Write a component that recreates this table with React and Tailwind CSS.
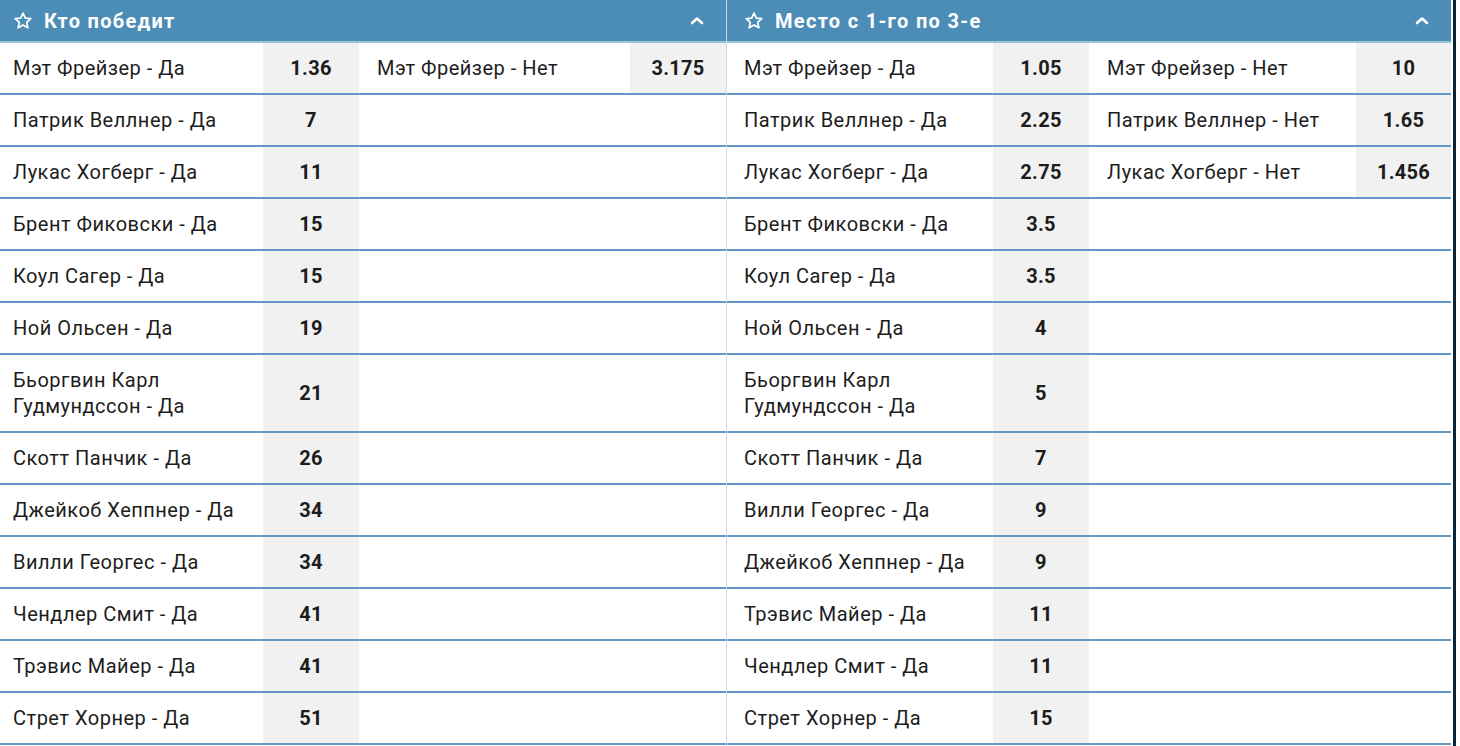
import React from "react";

const leftRows = [
  ["Мэт Фрейзер - Да", "1.36", "Мэт Фрейзер - Нет", "3.175"],
  ["Патрик Веллнер - Да", "7"],
  ["Лукас Хогберг - Да", "11"],
  ["Брент Фиковски - Да", "15"],
  ["Коул Сагер - Да", "15"],
  ["Ной Ольсен - Да", "19"],
  ["Бьоргвин Карл\nГудмундссон - Да", "21"],
  ["Скотт Панчик - Да", "26"],
  ["Джейкоб Хеппнер - Да", "34"],
  ["Вилли Георгес - Да", "34"],
  ["Чендлер Смит - Да", "41"],
  ["Трэвис Майер - Да", "41"],
  ["Стрет Хорнер - Да", "51"],
];

const rightRows = [
  ["Мэт Фрейзер - Да", "1.05", "Мэт Фрейзер - Нет", "10"],
  ["Патрик Веллнер - Да", "2.25", "Патрик Веллнер - Нет", "1.65"],
  ["Лукас Хогберг - Да", "2.75", "Лукас Хогберг - Нет", "1.456"],
  ["Брент Фиковски - Да", "3.5"],
  ["Коул Сагер - Да", "3.5"],
  ["Ной Ольсен - Да", "4"],
  ["Бьоргвин Карл\nГудмундссон - Да", "5"],
  ["Скотт Панчик - Да", "7"],
  ["Вилли Георгес - Да", "9"],
  ["Джейкоб Хеппнер - Да", "9"],
  ["Трэвис Майер - Да", "11"],
  ["Чендлер Смит - Да", "11"],
  ["Стрет Хорнер - Да", "15"],
];

function Star() {
  return (
    <svg width="20" height="20" viewBox="0 0 24 24" fill="none" stroke="white" strokeWidth="2.1" strokeLinejoin="round">
      <path d="M12 2.5l2.8 6 6.5.75-4.85 4.45 1.35 6.4L12 16.9l-5.8 3.2 1.35-6.4L2.7 9.25l6.5-.75z" />
    </svg>
  );
}

function Chevron() {
  return (
    <svg width="14" height="9" viewBox="0 0 14 9" fill="none" stroke="white" strokeWidth="2.6" strokeLinecap="round" strokeLinejoin="round">
      <path d="M2 7l5-4.5 5 4.5" />
    </svg>
  );
}

function Panel({ title, rows, cols, pad }) {
  return (
    <div className="flex flex-col">
      <div className={`flex h-[43px] items-center justify-between bg-[#4b8db6] ${pad} pr-[22px] border-b-2 border-[#9cc2da]`}>
        <div className="flex items-center gap-[11px]">
          <Star />
          <span className="text-[20px] font-bold tracking-[1.3px] text-white leading-none">{title}</span>
        </div>
        <Chevron />
      </div>
      {rows.map((r, i) => (
        <div key={i} className={`grid ${cols} border-b-2 border-[#6696c4]`}>
          <div className={`py-3 ${pad} pr-2 text-[20px] tracking-[0.5px] leading-[26px] text-[#1d1d1d] whitespace-pre-line`}>{r[0]}</div>
          <div className="flex items-center justify-center bg-[#f1f1f1] text-[20px] font-bold tracking-[0.3px] text-[#1c1c1c]">{r[1]}</div>
          <div className="py-3 pl-[18px] pr-2 text-[20px] tracking-[0.5px] leading-[26px] text-[#1d1d1d]">{r[2]}</div>
          <div className={`flex items-center justify-center text-[20px] font-bold tracking-[0.3px] text-[#1c1c1c] ${r[3] ? "bg-[#f1f1f1]" : ""}`}>{r[3]}</div>
        </div>
      ))}
    </div>
  );
}

export default function App() {
  return (
    <div className="flex h-[746px] w-[1460px] overflow-hidden bg-white font-['Roboto',sans-serif]">
      <div className="w-[726px]">
        <Panel title="Кто победит" rows={leftRows} cols="grid-cols-[263px_96px_1fr_96px]" pad="pl-[13px]" />
      </div>
      <div className="w-px bg-[#cfd8df]" />
      <div className="w-[724px]">
        <Panel title="Место с 1-го по 3-е" rows={rightRows} cols="grid-cols-[266px_96px_1fr_95px]" pad="pl-[17px]" />
      </div>
      <div className="w-[2px]" />
      <div className="w-[3px] bg-[#0d2339]" />
    </div>
  );
}
